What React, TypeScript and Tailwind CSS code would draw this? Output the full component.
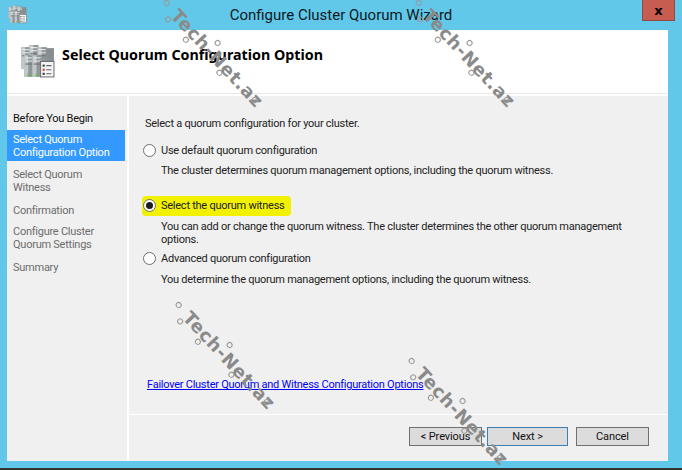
const font = { fontFamily: 'Roboto, "Noto Sans", sans-serif' };

function ServerIcon({ className }: { className: string }) {
  const tower = (x: number, y: number, key: string) => (
    <g key={key}>
      <rect x={x} y={y} width="9" height="21" fill="#8f9598" />
      <rect x={x} y={y} width="4" height="21" fill="#c3c8ca" />
      <rect x={x + 1} y={y + 2} width="7" height="1" fill="#eef0f1" />
      <rect x={x + 1} y={y + 5} width="7" height="1" fill="#e3e5e6" />
      <rect x={x + 1} y={y + 8} width="7" height="1" fill="#6d7376" />
    </g>
  );
  return (
    <svg viewBox="0 0 34 32" className={className}>
      <rect x="24" y="3" width="9" height="24" fill="#888d90" />
      {tower(1, 2, "a")}
      {tower(9, 0, "b")}
      {tower(17, 2, "c")}
      {tower(4, 10, "d")}
      {tower(12, 10, "e")}
      <rect x="7" y="28" width="2" height="2" fill="#63c13c" />
      <rect x="15" y="28" width="2" height="2" fill="#63c13c" />
      <rect x="20" y="16" width="13" height="15" fill="#f5f5f5" stroke="#6f6f6f" />
      <rect x="22" y="19" width="2" height="2" fill="#33333a" />
      <rect x="22" y="23" width="2" height="2" fill="#d0342c" />
      <rect x="22" y="27" width="2" height="2" fill="#33333a" />
      <path d="M25.500 20h5M25.500 24h5M25.500 28h5" stroke="#5a6270" strokeWidth="1" />
    </svg>
  );
}

function Watermark({ className }: { className: string }) {
  return (
    <div
      className={`absolute flex h-[20px] w-[128px] origin-top-left rotate-[47deg] items-center pointer-events-none text-[#8a8a8a] ${className}`}
    >
      <span className="absolute left-[-10px] top-[6px] h-[6px] w-[6px] rounded-full border border-[#999]" />
      <span className="absolute left-[3px] top-[16px] h-[6px] w-[6px] rounded-full border border-[#999]" />
      <span className="absolute left-[30px] top-[17px] h-[6px] w-[6px] rounded-full border border-[#999]" />
      <span className="absolute left-[54px] top-[-4px] h-[6px] w-[6px] rounded-full border border-[#999]" />
      <span className="absolute left-[77px] top-[15px] h-[6px] w-[6px] rounded-full border border-[#999]" />
      <span className="absolute left-[121px] top-[8px] h-[6px] w-[6px] rounded-full border border-[#999]" />
      <span className="pl-[5px] whitespace-nowrap text-[18px] leading-none font-bold tracking-[0.7px]" style={{ fontFamily: '"DejaVu Sans", sans-serif' }}>
        Tech-Net.az
      </span>
    </div>
  );
}

function Radio({ checked }: { checked?: boolean }) {
  return (
    <span className="flex h-[13px] w-[13px] shrink-0 items-center justify-center rounded-full border border-[#6e6e6e] bg-white">
      {checked && <span className="h-[7px] w-[7px] rounded-full bg-[#1c1c1c]" />}
    </span>
  );
}

const steps = [
  { label: ["Before You Begin"], cls: "mt-[12px] h-[20px] text-[#111]" },
  { label: ["Select Quorum", "Configuration Option"], cls: "mt-[2px] h-[31px] bg-[#3399ff] text-white" },
  { label: ["Select Quorum", "Witness"], cls: "mt-[6px] h-[27px] text-[#6d6d6d]" },
  { label: ["Confirmation"], cls: "mt-[9px] h-[14px] text-[#6d6d6d]" },
  { label: ["Configure Cluster", "Quorum Settings"], cls: "mt-[7px] h-[27px] text-[#6d6d6d]" },
  { label: ["Summary"], cls: "mt-[9px] h-[14px] text-[#6d6d6d]" },
];

export default function App() {
  return (
    <div className="relative flex h-[470px] w-[682px] flex-col overflow-hidden bg-[#62c8ea] text-[#1a1a1a]" style={font}>
      {/* title bar */}
      <div className="flex h-[30px] shrink-0 items-center justify-center text-[15px] text-[#0c1a22]">
        <ServerIcon className="absolute left-[8px] top-[5px] h-[19px] w-[19px]" />
        <span>Configure Cluster Quorum Wizard</span>
        <div className="absolute left-[642px] top-0 flex h-[21px] w-[33px] items-center justify-center border border-[#8f4a42] border-t-0 bg-[#c75c50]">
          <span className="text-[13px] leading-none font-black text-black" style={{ fontFamily: '"DejaVu Sans", sans-serif' }}>x</span>
        </div>
      </div>

      {/* wizard body */}
      <div className="mx-[7px] mr-[14px] flex h-[431px] shrink-0 flex-col bg-white">
        <div className="flex h-[64px] shrink-0 items-start border-b border-[#e9e9e9]">
          <ServerIcon className="ml-[13px] mt-[15px] h-[33px] w-[35px]" />
          <h1 className="ml-[7px] mt-[15px] whitespace-nowrap text-[14.300px] leading-[20px] font-bold text-black" style={{ fontFamily: '"Noto Sans", sans-serif' }}>
            Select Quorum Configuration Option
          </h1>
        </div>
        <div className="mt-[2px] flex min-h-0 flex-1">
          <nav className="flex w-[120px] shrink-0 flex-col bg-[#f0f0f0] text-[11px] leading-[13px] tracking-[-0.25px]">
            {steps.map((s) => (
              <div key={s.label.join(" ")} className={`mr-[2px] flex flex-col justify-center pl-[6px] ${s.cls}`}>
                {s.label.map((l) => (
                  <span key={l} className="whitespace-nowrap">{l}</span>
                ))}
              </div>
            ))}
          </nav>
          <div className="ml-[2px] flex min-w-0 flex-1 flex-col bg-[#f0f0f0]">
            <main className="flex h-[319px] shrink-0 flex-col border-b border-white pl-[16px] text-[11px] leading-[13px] tracking-[-0.25px] text-[#222]">
              <p className="mt-[21px]">Select a quorum configuration for your cluster.</p>
              <label className="ml-[-2px] mt-[14px] flex h-[13px] items-center gap-[5px]">
                <Radio />
                <span>Use default quorum configuration</span>
              </label>
              <p className="ml-[16px] mt-[7px]">The cluster determines quorum management options, including the quorum witness.</p>
              <label className="relative ml-[-2px] mt-[22px] flex h-[13px] items-center gap-[5px]">
                <span className="absolute left-[-1px] top-[-3px] h-[20px] w-[149px] rounded-sm bg-[#f2f200]" />
                <span className="relative flex items-center gap-[5px]">
                  <Radio checked />
                  <span>Select the quorum witness</span>
                </span>
              </label>
              <p className="ml-[16px] mt-[8px] w-[480px]">You can add or change the quorum witness. The cluster determines the other quorum management options.</p>
              <label className="ml-[-2px] mt-[6px] flex h-[13px] items-center gap-[5px]">
                <Radio />
                <span>Advanced quorum configuration</span>
              </label>
              <p className="ml-[16px] mt-[8px]">You determine the quorum management options, including the quorum witness.</p>
              <a href="#" className="ml-[2px] mt-[92px] w-fit whitespace-nowrap text-[#0000ff] underline">
                Failover Cluster Quorum and Witness Configuration Options
              </a>
            </main>
            <footer className="flex flex-1 items-start justify-end gap-[8px] pr-[19px] pt-[12px] text-[11px] tracking-[-0.1px] text-[#111]">
              <button className="mr-[-3px] h-[19px] w-[73px] border border-[#707070] bg-[#dcdcdc] leading-none">&lt; Previous</button>
              <button className="h-[19px] w-[81px] border border-[#3c7fb1] bg-[#dcdcdc] leading-none">Next &gt;</button>
              <button className="h-[19px] w-[73px] border border-[#707070] bg-[#dcdcdc] leading-none">Cancel</button>
            </footer>
          </div>
        </div>
      </div>

      <div className="mt-auto h-[2px] bg-[#333]" />

      <Watermark className="left-[178px] top-[2px]" />
      <Watermark className="left-[430px] top-[2px]" />
      <Watermark className="left-[190px] top-[304px]" />
      <Watermark className="left-[423px] top-[360px]" />
    </div>
  );
}
